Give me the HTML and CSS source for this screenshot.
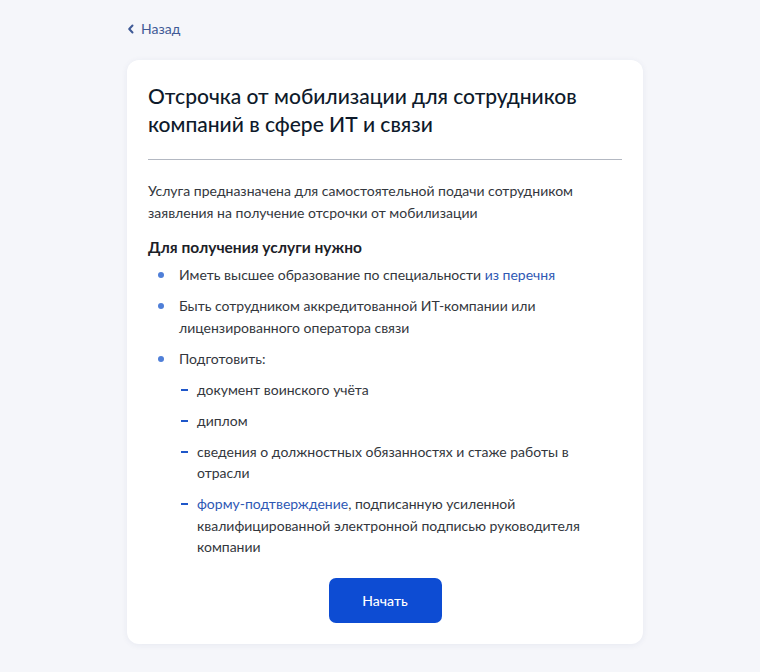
FILE: index.html
```html
<!DOCTYPE html>
<html lang="ru">
<head>
<meta charset="utf-8">
<link rel="stylesheet" href="styles.css">
</head>
<body>
<div class="page">
  <a class="back" href="#">
    <svg class="back-icon" width="8" height="10" viewBox="0 0 8 10"><path d="M5.5 1.5 L2.2 5 L5.5 8.5" fill="none" stroke="#3f5a96" stroke-width="2" stroke-linecap="round" stroke-linejoin="round"/></svg>
    <span>Назад</span>
  </a>
  <div class="card">
    <h1 class="title">Отсрочка от мобилизации для сотрудников компаний в сфере ИТ и связи</h1>
    <hr class="divider">
    <p class="desc">Услуга предназначена для самостоятельной подачи сотрудником заявления на получение отсрочки от мобилизации</p>
    <h2 class="subhead">Для получения услуги нужно</h2>
    <ul class="list">
      <li class="item">Иметь высшее образование по специальности <a class="link" href="#">из перечня</a></li>
      <li class="item">Быть сотрудником аккредитованной ИТ-компании или лицензированного оператора связи</li>
      <li class="item">Подготовить:</li>
      <li class="sub">документ воинского учёта</li>
      <li class="sub">диплом</li>
      <li class="sub">сведения о должностных обязанностях и стаже работы в отрасли</li>
      <li class="sub"><a class="link" href="#">форму-подтверждение</a>, подписанную усиленной квалифицированной электронной подписью руководителя компании</li>
    </ul>
    <div class="actions">
      <button class="btn">Начать</button>
    </div>
  </div>
</div>
</body>
</html>
```
FILE: styles.css
```css
html, body {
  margin: 0;
  padding: 0;
  background: #f5f6fa;
}
body {
  font-family: Lato, "Noto Sans", sans-serif;
  color: #2b2f36;
}
.page {
  width: 516px;
  margin: 0 0 0 127px;
  padding: 18px 0 29px;
}
.back {
  display: inline-flex;
  align-items: center;
  gap: 6px;
  color: #3f5a96;
  text-decoration: none;
  font-size: 14px;
  line-height: 20px;
  height: 20px;
}
.back-icon {
  display: block;
}
.card {
  margin-top: 21px;
  background: #fff;
  border-radius: 12px;
  box-shadow: 0 1px 6px rgba(40, 60, 110, 0.07);
  padding: 22px 21px 21px;
}
.title {
  margin: 0;
  font-size: 21px;
  line-height: 28px;
  font-weight: 500;
  color: #0e1a2b;
}
.divider {
  margin: 21px 0 20px;
  border: 0;
  height: 1px;
  background: #b3b8c2;
}
.desc {
  margin: 0;
  font-size: 14px;
  line-height: 22px;
  color: #33373d;
}
.subhead {
  margin: 12px 0 6px;
  font-size: 15.5px;
  line-height: 22px;
  font-weight: 700;
  color: #1c2128;
}
.list {
  list-style: none;
  margin: 0;
  padding: 0;
  display: flex;
  flex-direction: column;
  gap: 9.5px;
  font-size: 14px;
  line-height: 21.5px;
  color: #33373d;
}
.item {
  position: relative;
  padding-left: 31px;
}
.item::before {
  content: "";
  position: absolute;
  left: 10px;
  top: 8px;
  width: 6px;
  height: 6px;
  border-radius: 50%;
  background: #4f7fd8;
}
.sub {
  position: relative;
  padding-left: 49px;
  padding-right: 20px;
}
.sub::before {
  content: "";
  position: absolute;
  left: 33px;
  top: 10px;
  width: 7px;
  height: 2px;
  background: #1f57c9;
}
.link {
  color: #2e58b4;
  text-decoration: none;
}
.actions {
  display: flex;
  justify-content: center;
  margin-top: 20px;
}
.btn {
  width: 113px;
  height: 45px;
  border: 0;
  border-radius: 7px;
  background: #0d4cd3;
  color: #fff;
  font-family: Lato, "Noto Sans", sans-serif;
  font-size: 14px;
  font-weight: 500;
}
```
